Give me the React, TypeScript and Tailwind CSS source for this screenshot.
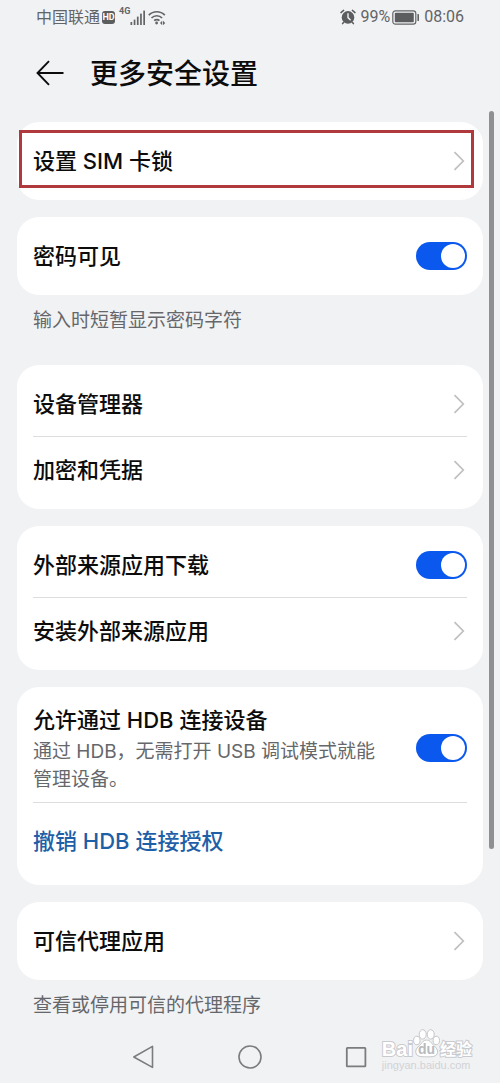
import { useState } from "react";
import type { ReactNode } from "react";

const Card = ({ children }: { children: ReactNode }) => (
  <section className="relative rounded-[22px] bg-white px-4 py-1.5">{children}</section>
);

const Chevron = () => (
  <svg viewBox="0 0 12 20" className="mr-0.5 h-5 w-3 shrink-0" fill="none" stroke="#bfbfc1" strokeWidth="1.7" aria-hidden="true">
    <path d="M1.5 1.2 10.3 10 1.5 18.8" />
  </svg>
);

const LinkRow = ({ label, divider }: { label: string; divider?: boolean }) => (
  <button
    type="button"
    className={`flex h-[66px] w-full items-center justify-between text-left text-[22px] leading-8 font-medium text-[#0c0c0c] ${
      divider ? "border-b border-[#dcdddf]" : ""
    }`}
  >
    {label}
    <Chevron />
  </button>
);

const Toggle = ({ id }: { id: string }) => {
  const [checked, setChecked] = useState(true);

  return (
    <input
      id={id}
      type="checkbox"
      role="switch"
      checked={checked}
      onChange={(e) => setChecked(e.target.checked)}
      className="flex h-7 w-[51px] shrink-0 cursor-pointer appearance-none items-center rounded-full bg-[#c9cacc] px-0.5 before:size-6 before:rounded-full before:bg-white checked:justify-end checked:bg-[#0b58ee]"
    />
  );
};

const SwitchRow = ({ id, label, divider }: { id: string; label: string; divider?: boolean }) => (
  <div className={`flex h-[66px] items-center justify-between ${divider ? "border-b border-[#dcdddf]" : ""}`}>
    <label htmlFor={id} className="text-[22px] leading-8 font-medium text-[#0c0c0c]">
      {label}
    </label>
    <Toggle id={id} />
  </div>
);

const Caption = ({ children }: { children: ReactNode }) => (
  <p className="px-4 pt-3 pb-[13px] text-[19px] leading-7 text-[#66676a]">{children}</p>
);

const StatusBar = () => (
  <div className="flex h-[34px] items-center justify-between pr-9 pl-9 text-[#636466]">
    <div className="flex items-center">
      <span className="text-base leading-6">中国联通</span>
      <span className="ml-0.5 flex h-[13px] w-[13px] items-center justify-center rounded-[3px] bg-[#5c5d5f] font-[Roboto] text-[9px] leading-3 font-bold text-white">
        HD
      </span>
      <span className="ml-1 self-start font-[Roboto] text-[9px] leading-3 font-bold">4G</span>
      <svg viewBox="0 0 16 15" className="h-[15px] w-4" fill="#636466" aria-hidden="true">
        <rect x="0.5" y="12" width="1.7" height="3" />
        <rect x="3.7" y="9.6" width="1.7" height="5.4" />
        <rect x="6.9" y="6.6" width="1.7" height="8.4" />
        <rect x="10.1" y="3.6" width="1.7" height="11.4" />
        <rect x="13.3" y="0.6" width="1.7" height="14.4" />
      </svg>
      <svg viewBox="0 0 18 15" className="ml-0.5 h-[15px] w-[18px]" fill="none" stroke="#636466" strokeWidth="1.7" aria-hidden="true">
        <path d="M0.8 5.2c4.4-4.6 11.6-4.6 16 0" />
        <path d="M3.5 8c2.9-3 7.7-3 10.6 0" />
        <path d="M6.2 10.7c1.4-1.5 3.8-1.5 5.2 0" />
        <circle cx="8.6" cy="13" r="1.4" fill="#636466" stroke="none" />
        <path d="M14.2 10.8 12 13l2.2 2.2zM15 10.8 17.2 13 15 15.2z" fill="#636466" stroke="none" />
      </svg>
    </div>
    <div className="flex items-center font-[Roboto] text-base leading-6">
      <svg viewBox="0 0 16 16" className="mr-1 size-4" fill="none" stroke="#5c5d5f" strokeLinecap="round" aria-hidden="true">
        <circle cx="8" cy="8.4" r="6.3" fill="#5c5d5f" stroke="none" />
        <path d="M1 3.6 3.6 1.4M15 3.6 12.4 1.4M3.8 13.2 2.6 14.6M12.2 13.2l1.2 1.4" strokeWidth="1.5" />
        <path d="M8 4.8v3.8l2.2 2.2" stroke="#f1f2f4" strokeWidth="1.4" />
      </svg>
      <span>99%</span>
      <svg viewBox="0 0 28 15" className="mr-1 ml-0.5 h-[15px] w-7" fill="none" aria-hidden="true">
        <rect x="0.8" y="0.8" width="23" height="13.4" rx="2.6" stroke="#636466" strokeWidth="1.2" />
        <rect x="2.8" y="2.8" width="19" height="9.4" rx="1" fill="#5c5d5f" />
        <rect x="25.4" y="4" width="1.6" height="7" rx="0.6" fill="#636466" />
      </svg>
      <span>08:06</span>
    </div>
  </div>
);

const NavBar = () => (
  <nav className="flex h-12 items-center justify-center gap-20">
    <button type="button" aria-label="返回">
      <svg viewBox="0 0 26 26" className="size-[26px]" fill="none" stroke="#7b7c7e" strokeWidth="1.6" strokeLinejoin="round" aria-hidden="true">
        <path d="M21.5 2.4v21L2.8 13z" />
      </svg>
    </button>
    <button type="button" aria-label="主页">
      <svg viewBox="0 0 26 26" className="size-[26px]" fill="none" stroke="#7b7c7e" strokeWidth="1.6" aria-hidden="true">
        <circle cx="13" cy="13" r="11" />
      </svg>
    </button>
    <button type="button" aria-label="最近任务">
      <svg viewBox="0 0 26 26" className="size-[26px]" fill="none" stroke="#7b7c7e" strokeWidth="1.8" strokeLinejoin="round" aria-hidden="true">
        <rect x="3.8" y="3.8" width="18.6" height="18.6" rx="0.6" />
      </svg>
    </button>
  </nav>
);

const Watermark = () => (
  <div className="pointer-events-none absolute right-7 bottom-3 text-white">
    <div className="flex items-end whitespace-nowrap">
      <span className="font-[Liberation_Sans] text-[20px] leading-5 font-bold [paint-order:stroke] [-webkit-text-stroke:2px_#c9cacd]">
        Bai
      </span>
      <span className="relative flex h-[30px] w-[27px] items-end justify-center">
        <svg viewBox="0 0 27 30" className="absolute inset-0 h-[30px] w-[27px]" fill="#ffffff" stroke="#c4c5c8" aria-hidden="true">
          <path d="M13.6 11c-3 0-4.4 2.3-6 4.3-2.2 2.5-5.4 4.4-4.8 8.2.7 4.5 5.4 4.3 10.8 4.3s10.3.2 10.9-4.3c.5-3.8-2.7-5.7-4.9-8.2C18 13.3 16.6 11 13.6 11z" />
          <ellipse cx="3.8" cy="11.5" rx="3.2" ry="4.2" />
          <ellipse cx="9.7" cy="5.4" rx="3.5" ry="4.7" />
          <ellipse cx="17.7" cy="5.4" rx="3.5" ry="4.7" />
          <ellipse cx="23.3" cy="11.5" rx="3.2" ry="4.2" />
        </svg>
        <span className="relative font-[Liberation_Sans] text-[14px] leading-5 font-bold text-[#b9babd]">du</span>
      </span>
      <span className="text-base leading-5 font-bold [paint-order:stroke] [-webkit-text-stroke:2px_#c9cacd]">经验</span>
    </div>
    <p className="font-[Liberation_Sans] text-[11px] leading-3 text-[#d2d3d6]">jingyan.baidu.com</p>
  </div>
);

const App = () => {
  return (
    <div className="relative min-h-screen bg-[#f1f2f4] font-[Inter,'Noto_Sans_CJK_SC',sans-serif]">
      <StatusBar />

      <header className="flex h-[77px] items-center gap-[26px] pl-9">
        <button type="button" aria-label="返回">
          <svg viewBox="0 0 28 26" className="h-[26px] w-7" fill="none" stroke="#0c0c0c" strokeWidth="1.9" aria-hidden="true">
            <path d="M27.5 13H1.5M13 1.2 1.5 13 13 24.8" />
          </svg>
        </button>
        <h1 className="pt-0.5 text-[28px] leading-10 font-medium text-[#0c0c0c]">更多安全设置</h1>
      </header>

      <main className="relative px-[17px] pt-[11px]">
        <div className="flex flex-col gap-[17px]">
          <Card>
            <LinkRow label="设置 SIM 卡锁" />
            <div className="pointer-events-none absolute top-2 right-[9px] bottom-3 left-0.5 border-[3px] border-[#b0393d]" />
          </Card>

          <div>
            <Card>
              <SwitchRow id="password-visible" label="密码可见" />
            </Card>
            <Caption>输入时短暂显示密码字符</Caption>
          </div>

          <Card>
            <LinkRow label="设备管理器" divider />
            <LinkRow label="加密和凭据" />
          </Card>

          <Card>
            <SwitchRow id="external-download" label="外部来源应用下载" divider />
            <LinkRow label="安装外部来源应用" />
          </Card>

          <Card>
            <div className="flex h-[110px] items-center justify-between gap-8 border-b border-[#dcdddf]">
              <div className="pt-0.5">
                <label htmlFor="hdb" className="block text-[22px] leading-8 font-medium text-[#0c0c0c]">
                  允许通过 HDB 连接设备
                </label>
                <p className="mt-0.5 text-[19px] leading-7 text-[#66676a]">
                  通过 HDB，无需打开 USB 调试模式就能管理设备。
                </p>
              </div>
              <Toggle id="hdb" />
            </div>
            <button type="button" className="flex h-[76px] w-full items-center text-[22px] leading-8 font-medium text-[#1f5fa8]">
              撤销 HDB 连接授权
            </button>
          </Card>

          <div>
            <Card>
              <LinkRow label="可信代理应用" />
            </Card>
            <Caption>查看或停用可信的代理程序</Caption>
          </div>
        </div>

        {/* scroll thumb */}
        <div className="absolute top-0 right-1.5 h-4/5 w-[5px] rounded-full bg-[#8f9092]" />
      </main>

      <NavBar />
      <Watermark />
    </div>
  );
};

export default App;
